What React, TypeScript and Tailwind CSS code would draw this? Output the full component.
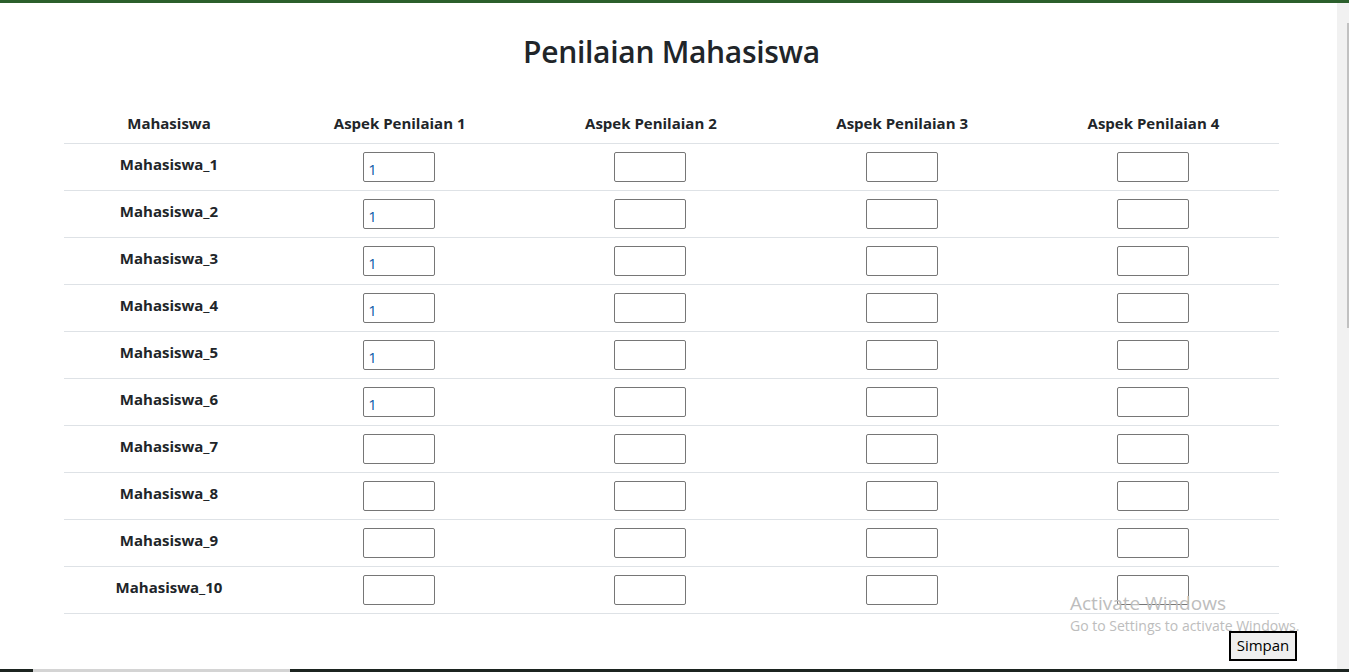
const rows = Array.from({ length: 10 }, (_, i) => ({
  name: `Mahasiswa_${i + 1}`,
  first: i < 6 ? '1' : '',
}))

const aspects = ['Aspek Penilaian 1', 'Aspek Penilaian 2', 'Aspek Penilaian 3', 'Aspek Penilaian 4']

export default function App() {
  return (
    <div className="relative h-[672px] w-[1349px] overflow-hidden bg-white text-[#212529] font-['Open_Sans',sans-serif]">
      <div className="h-[3px] bg-[#2b5f2c]" />
      <div className="flex h-[666px]">
        <div className="min-w-0 flex-1">
          <h1 className="mt-[29px] pl-[6px] text-center text-[30px] font-semibold leading-[40px] tracking-[-0.3px]">Penilaian Mahasiswa</h1>
          <table className="ml-[64px] mt-[24px] w-[1215px] table-fixed border-collapse text-[15px]">
            <thead>
              <tr className="h-[47px] border-b border-[#dee2e6]">
                <th className="w-[210px] pt-[8px] font-bold">Mahasiswa</th>
                {aspects.map((a) => (
                  <th key={a} className="pt-[8px] font-bold">{a}</th>
                ))}
              </tr>
            </thead>
            <tbody>
              {rows.map((r) => (
                <tr key={r.name} className="h-[47px] border-b border-[#dee2e6]">
                  <td className="pb-[4px] text-center font-bold">{r.name}</td>
                  {aspects.map((a, j) => (
                    <td key={a} className="pr-[1px] text-center align-middle">
                      <input
                        type="text"
                        defaultValue={j === 0 ? r.first : ''}
                        className="h-[30px] w-[72px] rounded-[2px] border border-[#767676] px-[4px] pt-[4px] text-[15px] text-[#0a5aa8] outline-none font-['Open_Sans',sans-serif]"
                      />
                    </td>
                  ))}
                </tr>
              ))}
            </tbody>
          </table>
          <div className="mr-[40px] mt-[17px] flex justify-end">
            <button className="h-[30px] w-[68px] border-2 border-black bg-[#efefef] text-[15px] text-black">Simpan</button>
          </div>
        </div>
        <div className="w-[12px] shrink-0 bg-[#f1f1f1] pt-[20px]">
          <div className="ml-auto h-[305px] w-[2px] bg-[#c1c1c1]" />
        </div>
      </div>
      <div className="flex h-[3px] bg-[#1c2420]">
        <div className="ml-[33px] w-[257px] bg-[#d4d4d4]" />
      </div>
      <div className="pointer-events-none absolute left-[1070px] top-[590px] text-[#bdbdbd]">
        <div className="text-[19px] leading-[26px]">Activate Windows</div>
        <div className="text-[14px] leading-[20px]">Go to Settings to activate Windows.</div>
      </div>
    </div>
  )
}
